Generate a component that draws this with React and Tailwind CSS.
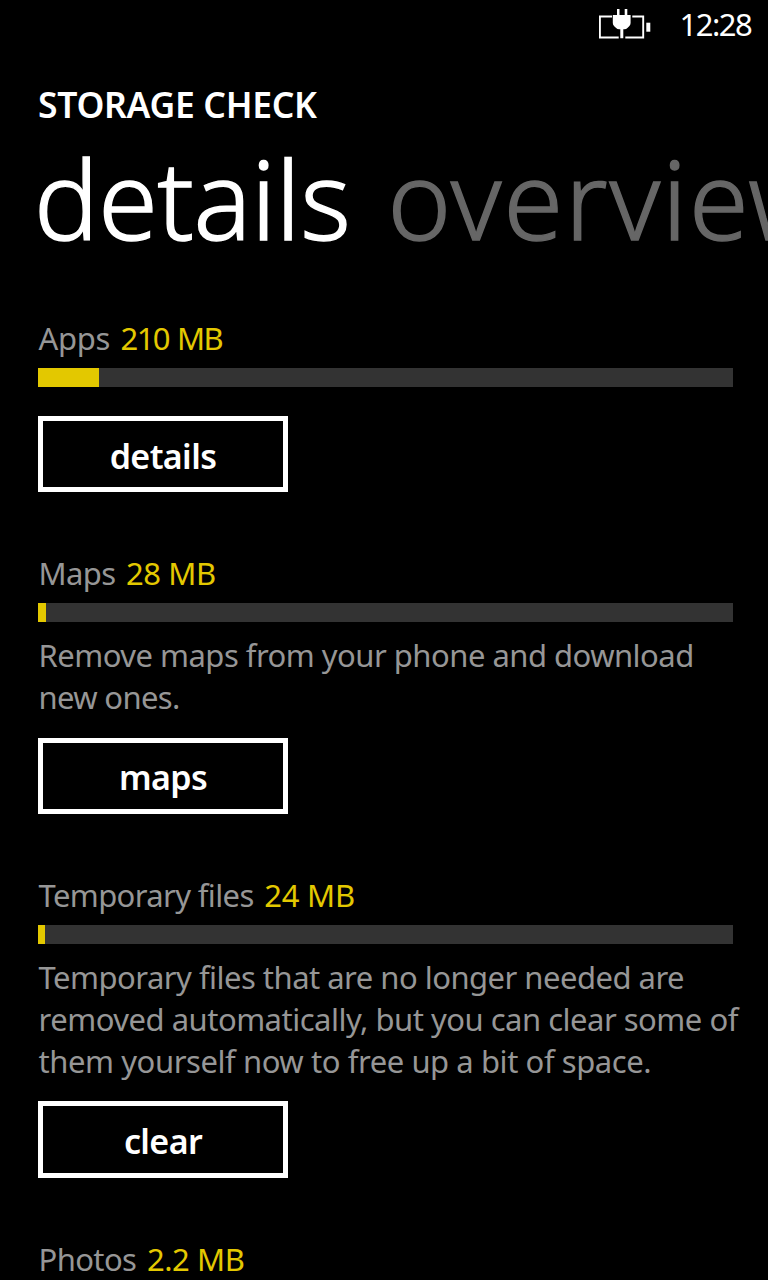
const sections = [
  {
    label: "Apps",
    labelTracking: "tracking-[-0.3px]",
    size: "210 MB",
    sizeTracking: "tracking-[-1.7px] [word-spacing:2px]",
    fill: 61,
    lines: [],
    action: "details",
  },
  {
    label: "Maps",
    labelTracking: "tracking-[-0.6px]",
    size: "28 MB",
    sizeTracking: "tracking-[-0.4px]",
    fill: 8.4,
    lines: [
      { text: "Remove maps from your phone and download", tracking: "tracking-[-0.52px]" },
      { text: "new ones.", tracking: "tracking-[-0.65px]" },
    ],
    action: "maps",
  },
  {
    label: "Temporary files",
    labelTracking: "tracking-[-0.63px]",
    size: "24 MB",
    sizeTracking: "tracking-[-0.2px]",
    fill: 7,
    lines: [
      { text: "Temporary files that are no longer needed are", tracking: "tracking-[-0.52px]" },
      { text: "removed automatically, but you can clear some of", tracking: "tracking-[-0.5px]" },
      { text: "them yourself now to free up a bit of space.", tracking: "tracking-[-0.43px]" },
    ],
    action: "clear",
  },
  {
    label: "Photos",
    labelTracking: "tracking-[-0.6px]",
    size: "2.2 MB",
    sizeTracking: "tracking-[-0.4px]",
    fill: 1,
    lines: [],
    action: null,
  },
];

function BatteryCharging() {
  return (
    <svg className="mt-[2px]" width="52" height="32" viewBox="0 0 52 32" fill="none">
      <path d="M13 7.500H0.900V28.500H19.700M33.300 7.500H44.200V28.500H26.300" stroke="#fff" strokeWidth="1.900" />
      <path d="M47.300 13.700h4v9h-4z" fill="#fff" />
      <path
        d="M18 0h2.500v6h5.200V0h2.600v6h3.300v8q0 2-1.400 3.300l-1.800 1.800q-1.200 1.200-3 1.200h-1.100v9h-3v-9h-1.200q-1.800 0-3-1.200l-1.900-1.800q-1.400-1.300-1.400-3.300V6H18z"
        fill="#fff"
      />
    </svg>
  );
}

function Section({ label, labelTracking, size, sizeTracking, fill, lines, action }) {
  return (
    <section className="flex flex-col items-start">
      <h2 className="flex h-[43px] gap-[10.500px] pl-[0.500px] whitespace-nowrap text-[31px] leading-[45px] text-[#969696]">
        <span className={labelTracking}>{label}</span>
        <span className={`text-[#e3c800] ${sizeTracking}`}>{size}</span>
      </h2>
      <div className="mt-[9px] h-[19px] w-[695px] bg-[#333333]">
        <div className="h-full bg-[#e3c800]" style={{ width: fill }} />
      </div>
      {lines.length > 0 && (
        <p className="mt-[12px] -mb-[10px] pl-[0.500px] whitespace-nowrap text-[31px] leading-[42.2px] text-[#969696]">
          {lines.map(({ text, tracking }) => (
            <span key={text} className={`block ${tracking}`}>
              {text}
            </span>
          ))}
        </p>
      )}
      {action && (
        <button className="mt-[29px] flex h-[76.400px] w-[250px] items-center justify-center border-[5px] border-white pt-[3px] text-[34px] leading-none font-semibold tracking-[-0.6px]">
          {action}
        </button>
      )}
    </section>
  );
}

export default function App() {
  return (
    <div className="flex h-[1280px] w-[768px] flex-col overflow-hidden bg-black font-['Noto_Sans',sans-serif] text-white">
      <div className="flex h-[48px] shrink-0 items-center justify-end gap-[28.500px] pr-[17.500px]">
        <BatteryCharging />
        <span className="w-[71px] whitespace-nowrap pt-[1px] text-[31px] tracking-[-1.500px]">12:28</span>
      </div>
      <header className="shrink-0 pl-[38px]">
        <h1 className="mt-[31px] h-[50px] whitespace-nowrap text-[35.500px] leading-[50px] font-semibold tracking-[-0.300px]">
          STORAGE CHECK
        </h1>
        <nav className="mt-[4px] -ml-[4px] flex h-[132px] gap-[37px] whitespace-nowrap text-[108px] leading-[132px] font-light [-webkit-text-stroke-width:1.400px]">
          <span className="tracking-[-0.500px]">details</span>
          <span className="tracking-[1.900px] text-[#666666]">overview</span>
        </nav>
      </header>
      <main className="mt-[51px] flex shrink-0 flex-col gap-[58.800px] pl-[38px]">
        {sections.map((section) => (
          <Section key={section.label} {...section} />
        ))}
      </main>
    </div>
  );
}
